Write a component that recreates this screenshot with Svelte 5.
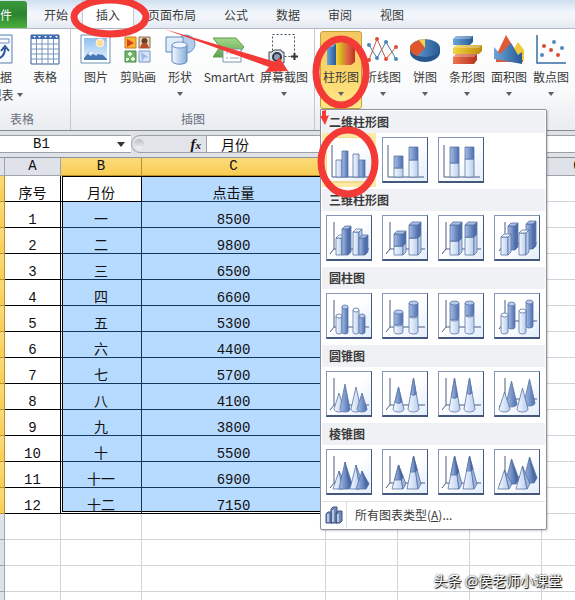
<script>
  const tabs = ['开始', '插入', '页面布局', '公式', '数据', '审阅', '视图'];

  const illustrations = [
    { label: '图片', icon: 'picture', size: 'small' },
    { label: '剪贴画', icon: 'clipart', size: 'medium' },
    { label: '形状', icon: 'shapes', size: 'small', menu: true },
    { label: 'SmartArt', icon: 'smartart', size: 'large' },
    { label: '屏幕截图', icon: 'screenshot', size: 'wide', menu: true }
  ];

  const charts = [
    { label: '柱形图', icon: 'column', open: true },
    { label: '折线图', icon: 'line' },
    { label: '饼图', icon: 'pie' },
    { label: '条形图', icon: 'bar' },
    { label: '面积图', icon: 'area' },
    { label: '散点图', icon: 'scatter' },
    { label: '其他图表', icon: 'other' }
  ];

  const months = ['一', '二', '三', '四', '五', '六', '七', '八', '九', '十', '十一', '十二'];
  const clicks = [8500, 9800, 6500, 6600, 5300, 4400, 5700, 4100, 3800, 5500, 6900, 7150];
  const columns = ['A', 'B', 'C', 'D', 'E', 'F', 'G', 'H'];
  const rest = ['D', 'E', 'F', 'G', 'H'];
  const emptyRows = [14, 15, 16, 17];

  // bars of each gallery thumbnail; split = height where the dark part ends
  const clustered = [
    { x: 9, w: 6, top: 22, bottom: 39 },
    { x: 15, w: 6, top: 13, bottom: 39, dark: true },
    { x: 26, w: 6, top: 16, bottom: 39 },
    { x: 32, w: 6, top: 22, bottom: 39, dark: true }
  ];
  const stacked = [
    { x: 11, w: 9, top: 18, split: 30, bottom: 39 },
    { x: 26, w: 9, top: 9, split: 22, bottom: 39 }
  ];
  const full = [
    { x: 11, w: 9, top: 9, split: 25, bottom: 39 },
    { x: 26, w: 9, top: 9, split: 21, bottom: 39 }
  ];
  const depth = [
    { x: 13, w: 7, top: 10, bottom: 34, dark: true },
    { x: 31, w: 7, top: 8, bottom: 33, dark: true },
    { x: 6, w: 7, top: 21, bottom: 39 },
    { x: 24, w: 7, top: 17, bottom: 39 }
  ];

  const gallery = [
    { title: '二维柱形图', kind: 'flat', items: [clustered, stacked, full] },
    { title: '三维柱形图', kind: 'box', items: [clustered, stacked, full, depth] },
    { title: '圆柱图', kind: 'cylinder', items: [clustered, stacked, full, depth] },
    { title: '圆锥图', kind: 'cone', items: [clustered, stacked, full, depth] },
    { title: '棱锥图', kind: 'pyramid', items: [clustered, stacked, full, depth] }
  ];
  const names = ['簇状', '堆积', '百分比堆积', '三维'];

  function axis(kind, item) {
    if (kind === 'flat') return 'M5 7V39H41';
    if (item === depth) return 'M10 6V27L4 35M10 27H42';
    return 'M7 6V33L3 38M7 33H42';
  }

  function block(kind, x, w, top, bottom, dark) {
    const fill = dark ? 'url(#dark)' : 'url(#light)';
    const r = x + w;
    if (kind === 'flat') return [{ d: `M${x} ${top}H${r}V${bottom}H${x}Z`, fill }];
    if (kind === 'box') {
      return [
        { d: `M${x} ${top}H${r}V${bottom}H${x}Z`, fill },
        { d: `M${x} ${top}l3-3h${w}l-3 3Z`, fill: dark ? '#a9bee3' : '#f5f9ff' },
        { d: `M${r} ${top}l3-3V${bottom - 3}l-3 3Z`, fill: dark ? '#4d6dab' : '#b8cae9' }
      ];
    }
    const h = w / 2;
    return [
      { d: `M${x} ${top}V${bottom - 1}a${h} 2 0 0 0 ${w} 0V${top}Z`, fill },
      { d: `M${x} ${top}a${h} 2 0 0 0 ${w} 0a${h} 2 0 0 0 ${-w} 0Z`, fill: dark ? '#b8cbed' : '#f4f8ff' }
    ];
  }

  function spike(kind, bar) {
    const grow = bar.split ? 1 : 2;
    const x = bar.x - grow;
    const w = bar.w + grow * 2;
    const mid = x + w / 2;
    const tip = bar.split ? bar.top - 3 : bar.top - 1;
    const fill = bar.dark ? 'url(#dark)' : 'url(#light)';
    const out = [];
    if (kind === 'cone') {
      out.push({ d: `M${mid} ${tip}L${x} ${bar.bottom - 2}a${w / 2} 3 0 0 0 ${w} 0Z`, fill });
    } else {
      out.push({ d: `M${mid} ${tip}L${x - 1} ${bar.bottom}H${x + w - 1}Z`, fill });
      out.push({ d: `M${mid} ${tip}L${x + w - 1} ${bar.bottom}l3-5Z`, fill: bar.dark ? '#4668a7' : '#9db4dc' });
    }
    if (bar.split) {
      const k = (bar.split - tip) / (bar.bottom - tip);
      const half = (w / 2) * k;
      if (kind === 'cone') {
        out.push({ d: `M${mid} ${tip}L${mid - half} ${bar.split}q${half} 3 ${half * 2} 0Z`, fill: 'url(#dark)' });
      } else {
        out.push({ d: `M${mid} ${tip}L${mid - half - k} ${bar.split}H${mid + half - k}Z`, fill: 'url(#dark)' });
        out.push({ d: `M${mid} ${tip}L${mid + half - k} ${bar.split}l${3 * k} ${-5 * k}Z`, fill: '#385b9c' });
      }
    }
    return out;
  }

  function parts(kind, item) {
    return item.flatMap((bar) => {
      if (kind === 'cone' || kind === 'pyramid') return spike(kind, bar);
      if (!bar.split) return block(kind, bar.x, bar.w, bar.top, bar.bottom, bar.dark);
      return [
        ...block(kind, bar.x, bar.w, bar.split, bar.bottom, false),
        ...block(kind, bar.x, bar.w, bar.top, bar.split, true)
      ];
    });
  }
</script>

{#snippet icon(name)}
  <svg class="icon" viewBox="0 0 32 32" aria-hidden="true">
    {#if name === 'pivot'}
      <path d="M1 1h29v28H1z" fill="#f5faff" stroke="#5a7fae" />
      <path d="M1 5h26v4H1z" fill="#fff" stroke="#6c8fbc" />
      <path d="M12 25c7 0 11-3 11-11M19 17l4-5 4 5M16 21l-5 4 5 4" fill="none" stroke="#2d5596" stroke-width="2" />
    {:else if name === 'table'}
      <path d="M2 1h28v29H2z" fill="#fff" stroke="#375d93" />
      <path d="M2 1h28v4H2z" fill="#3f6db4" />
      <path d="M2 10h28M2 15h28M2 20h28M2 25h28M7.500 5v25M13 5v25M19 5v25M24.500 5v25" stroke="#7595be" />
      <path d="M4 2h3l-1.500 2zM9 2h3l-1.500 2zM15 2h3l-1.500 2zM20 2h3l-1.500 2zM26 2h3l-1.500 2z" fill="#fff" />
    {:else if name === 'picture'}
      <path d="M1 1h29v28H1z" fill="#fff" stroke="#6d8fb8" />
      <path d="M4 4h23v22H4z" fill="url(#sky)" />
      <circle cx="20" cy="9" r="4" fill="#ffdca0" stroke="#fff3d4" />
      <path d="M4 24l7-8 5 6 4-4 7 7v1H4z" fill="#4777b5" />
      <path d="M8 20l3-4 4 5-3-1-1 2zM18 20l2-2 3 3z" fill="#e6f2ff" />
    {:else if name === 'clipart'}
      <path d="M3 3h11v11H3z" fill="#f7b52c" stroke="#cf7b2b" />
      <path d="M5 5l7 4-7 4z" fill="#d9421e" />
      <path d="M17 3h11v11H17z" fill="#f5d6aa" stroke="#806d62" />
      <circle cx="22.500" cy="7" r="3" fill="#654030" /><path d="M18 14q1-5 4.500-5t4.500 5z" fill="#b84d2a" />
      <path d="M3 17h11v11H3z" fill="#73b26e" stroke="#4b874d" />
      <path d="M8 18v4M6 20h4M5 24v3M4 25h3M11 23v4M9 25h4" stroke="#e0f6ce" stroke-width="2" />
      <path d="M17 17h11v11H17z" fill="#d7e4fa" stroke="#7896c5" /><path d="M19 18l7 5-4 1-2 4z" fill="#9eb7e6" />
    {:else if name === 'shapes'}
      <circle cx="22" cy="10" r="9" fill="#b3cdea" stroke="#6b8fbd" />
      <path d="M2 3h17v15H2z" fill="#e1edf9" stroke="#6188bc" />
      <path d="M8 11v16a7 3 0 0 0 15 0V11" fill="url(#cyl)" stroke="#5f87b9" />
      <ellipse cx="15.500" cy="11" rx="7.500" ry="3" fill="#edf6ff" stroke="#6d94c4" />
    {:else if name === 'smartart'}
      <path d="M0 4h23l8 9-8 10H0l7-10z" fill="url(#green)" stroke="#5b9c4b" />
      <path d="M10 15h18v13H10z" fill="#fff" stroke="#7b98ae" />
      <path d="M13 19h2M17 19h9M13 24h2M17 24h9" stroke="#95a6b7" />
    {:else if name === 'screenshot'}
      <path d="M4.500 .5h22v22h-22z" fill="none" stroke="#475261" stroke-dasharray="2 2" />
      <path d="M26.500 19v7M23 22.500h7" stroke="#333" stroke-width="2" />
      <path d="M1 18h3l2-2h7l1 2h2v11H1z" fill="#dce1e7" stroke="#3d4651" />
      <circle cx="9" cy="23" r="4" fill="#87a0bd" stroke="#303944" stroke-width="2" />
    {:else if name === 'column'}
      <path d="M2 13l4-3h5v21H2z" fill="url(#blue)" />
      <path d="M11 9l4-3h6v25H11z" fill="url(#gold)" />
      <path d="M20 9l5-3h5v22l-4 3h-6z" fill="url(#red)" />
      <path d="M2 13l4-3h5l-3 3zM11 9l4-3h6l-3 3zM20 9l5-3h5l-4 3z" fill="#fff" opacity=".35" />
    {:else if name === 'line'}
      <path d="M2 11l8 13 9-16 10 17" fill="none" stroke="#4a7fb0" />
      <path d="M2 26L10 5l9 20 10-12" fill="none" stroke="#c95740" />
      <g fill="#df4d35"><circle cx="2" cy="26" r="2" /><circle cx="10" cy="5" r="2" /><circle cx="19" cy="25" r="2" /><circle cx="29" cy="13" r="2" /></g>
      <g fill="#4b86b9"><circle cx="2" cy="11" r="2" /><circle cx="10" cy="24" r="2" /><circle cx="19" cy="8" r="2" /><circle cx="29" cy="25" r="2" /></g>
    {:else if name === 'pie'}
      <path d="M1 14v4a15 10 0 0 0 30 0v-4z" fill="#28578e" />
      <ellipse cx="16" cy="14" rx="15" ry="9" fill="url(#blue)" />
      <path d="M16 14L8 22Q1 19 1 14q0-5 9-8z" fill="#e0552c" />
      <path d="M16 14L10 6q3-1 6-1z" fill="#f4cf49" />
    {:else if name === 'bar'}
      <path d="M2 5l3-3h17v6l-3 3H2z" fill="url(#blue)" />
      <path d="M2 14l3-3h26v6l-3 3H2z" fill="url(#gold)" />
      <path d="M2 23l3-3h21v6l-3 4H2z" fill="url(#red)" />
      <path d="M2 5l3-3h17l-3 3zM2 14l3-3h26l-3 3zM2 23l3-3h21l-3 3z" fill="#fff" opacity=".3" />
    {:else if name === 'area'}
      <path d="M3 22L13 1l8 13 9 4v10H3z" fill="#e25a35" />
      <path d="M18 20l7-12 6 8v11z" fill="#f0c939" />
      <path d="M1 13l6 7 11-11 7 12 4-3v12L1 25z" fill="url(#blue)" />
    {:else if name === 'scatter'}
      <path d="M2 1v28h29" fill="none" stroke="#366da4" stroke-width="1.500" />
      <g fill="#d84e34"><circle cx="9" cy="12" r="2" /><circle cx="16" cy="16" r="2" /><circle cx="23" cy="21" r="2" /></g>
      <g fill="#5288bb"><circle cx="7" cy="21" r="2" /><circle cx="19" cy="8" r="2" /><circle cx="27" cy="14" r="2" /></g>
    {:else}
      <circle cx="16" cy="16" r="11" fill="none" stroke="#e39b43" stroke-width="5" />
    {/if}
  </svg>
{/snippet}

<div class="excel">
  <nav class="tabs">
    <button class="file">文件</button>
    {#each tabs as tab}
      <button class="tab" class:active={tab === '插入'}>{tab}</button>
    {/each}
  </nav>

  <div class="ribbon">
    <section class="group tables">
      <div class="buttons">
        <button class="tool pivot">
          {@render icon('pivot')}
          <span>数据</span>
          <span class="second">透视表<i class="arrow"></i></span>
        </button>
        <button class="tool table-tool">{@render icon('table')}<span>表格</span></button>
      </div>
      <div class="caption">表格</div>
    </section>
    <section class="group">
      <div class="buttons">
        {#each illustrations as tool}
          <button class="tool {tool.size}">
            {@render icon(tool.icon)}
            <span>{tool.label}</span>
            {#if tool.menu}<i class="arrow"></i>{/if}
          </button>
        {/each}
      </div>
      <div class="caption">插图</div>
    </section>
    <section class="group">
      <div class="buttons">
        {#each charts as tool}
          <div class="drop">
            <button class="tool chart" class:open={tool.open}>
              {@render icon(tool.icon)}
              <span>{tool.label}</span>
              <i class="arrow"></i>
            </button>
            {#if tool.open}
              <div class="menu">
                {#each gallery as section}
                  <h2>{section.title}</h2>
                  <div class="thumbs">
                    {#each section.items as item, i}
                      <button
                        class="thumb"
                        class:hover={section.kind === 'flat' && i === 0}
                        aria-label={names[i] + section.title}
                      >
                        <svg viewBox="0 0 44 44">
                          <path d={axis(section.kind, item)} fill="none" stroke="#4b5f83" />
                          {#each parts(section.kind, item) as part}
                            <path d={part.d} fill={part.fill} stroke="#5873a3" stroke-width=".8" stroke-linejoin="round" />
                          {/each}
                        </svg>
                      </button>
                    {/each}
                  </div>
                {/each}
                <button class="all">
                  <svg viewBox="0 0 18 18">
                    <path d="M1 8l2-2h4v11H1zM6 3l2-2h4v16H6zM11 7l2-2h4v10l-2 2h-4z" fill="#7389b5" stroke="#3f5482" />
                    <path d="M2 8h2v8H2zM7 4h2v12H7zM12 8h2v8h-2z" fill="#b9c8e5" />
                  </svg>
                  <span>所有图表类型(<u>A</u>)...</span>
                </button>
              </div>
            {/if}
          </div>
        {/each}
      </div>
      <div class="caption">图表</div>
    </section>
  </div>

  <div class="formula">
    <div class="name">
      <input aria-label="名称框" value="B1" />
      <i class="arrow dark"></i>
    </div>
    <div class="fx"><i class="knob"></i><button>f<small>x</small></button></div>
    <input class="value" aria-label="编辑栏" value="月份" />
  </div>

  <div class="sheet">
    <table>
      <colgroup>
        <col class="col-row" /><col class="col-a" /><col class="col-b" /><col class="col-c" />
        {#each rest as name}<col class="col-d" />{/each}
      </colgroup>
      <thead>
        <tr>
          <th></th>
          {#each columns as name}
            <th class:picked={name === 'B' || name === 'C'}>{name}</th>
          {/each}
        </tr>
      </thead>
      <tbody>
        <tr>
          <th class="picked"></th>
          <td class="line">序号</td>
          <td class="line first current">月份</td>
          <td class="line top blue">点击量</td>
          {#each rest as name}<td></td>{/each}
        </tr>
        {#each months as month, i}
          <tr class:last={i === 11}>
            <th class="picked"></th>
            <td class="line num">{i + 1}</td>
            <td class="line first blue">{month}</td>
            <td class="line blue num">{clicks[i]}</td>
            {#each rest as name}<td></td>{/each}
          </tr>
        {/each}
        {#each emptyRows as row}
          <tr>
            <th></th>
            <td></td><td></td><td></td>
            {#each rest as name}<td></td>{/each}
          </tr>
        {/each}
      </tbody>
    </table>
  </div>

  <svg class="marks" viewBox="0 0 575 600" aria-hidden="true">
    <defs>
      <linearGradient id="light"><stop offset="0" stop-color="#f4f9ff" /><stop offset="1" stop-color="#b9ccec" /></linearGradient>
      <linearGradient id="dark"><stop offset="0" stop-color="#a9bee4" /><stop offset="1" stop-color="#4c6fb2" /></linearGradient>
      <linearGradient id="sky" x2="0" y2="1"><stop offset="0" stop-color="#8fc0ef" /><stop offset="1" stop-color="#e2f2ff" /></linearGradient>
      <linearGradient id="cyl"><stop offset="0" stop-color="#f2f8ff" /><stop offset="1" stop-color="#85add9" /></linearGradient>
      <linearGradient id="green" x2="0" y2="1"><stop offset="0" stop-color="#a4d889" /><stop offset="1" stop-color="#5ea54e" /></linearGradient>
      <linearGradient id="blue"><stop offset="0" stop-color="#6ba5dc" /><stop offset="1" stop-color="#275992" /></linearGradient>
      <linearGradient id="gold"><stop offset="0" stop-color="#f2d33c" /><stop offset="1" stop-color="#c18a12" /></linearGradient>
      <linearGradient id="red"><stop offset="0" stop-color="#ee7650" /><stop offset="1" stop-color="#b83220" /></linearGradient>
    </defs>
    <g fill="none" stroke="#f43a37" stroke-width="7">
      <ellipse cx="110" cy="17" rx="36" ry="17" />
      <ellipse cx="341" cy="72" rx="25" ry="33" />
      <ellipse cx="348" cy="162" rx="27" ry="32" />
    </g>
    <path d="M164 29L276 62L279 57L288 71L265 72L269 67Z" fill="#f43a37" />
    <path d="M322 111l4-1v6l3-1-4 10-5-9h2z" fill="#f43a37" />
  </svg>
  <div class="watermark">头条 @侯老师小课堂</div>
</div>

<style>
  :global(body) {
    margin: 0;
    overflow: hidden;
  }

  .excel {
    position: relative;
    height: 100vh;
    overflow: hidden;
    display: flex;
    flex-direction: column;
    background: #fff;
    color: #3b3b3b;
    font: 12px "Noto Sans CJK SC", sans-serif;
  }

  button, input {
    margin: 0;
    padding: 0;
    border: 0;
    background: none;
    color: inherit;
    font: inherit;
    white-space: nowrap;
  }

  .tabs {
    display: flex;
    flex: none;
    height: 28px;
    background: linear-gradient(#cfdfef, #edf4fb 40%, #f3f6fa 60%, #e4eaf2);
  }

  .file {
    width: 27px;
    margin: 1px 3px 0 0;
    display: flex;
    justify-content: flex-end;
    align-items: center;
    padding-right: 15px;
    box-sizing: border-box;
    border-radius: 0 3px 0 0;
    background: linear-gradient(#3b9a3b, #2b8430 50%, #4cb03c);
    color: #fff;
  }

  .tab {
    padding: 0 14px;
  }

  .tab.active {
    padding: 0 13px;
    border: 1px solid #c2cad5;
    border-bottom: 0;
    background: #fff;
  }

  .ribbon {
    display: flex;
    flex: none;
    height: 101px;
    border-top: 1px solid #b3bac4;
    border-bottom: 1px solid #868b94;
    background: linear-gradient(#fff, #f9fafb 60%, #e9ecf0);
  }

  .group {
    flex: none;
    padding: 2px 4px 0 5px;
    border-right: 1px solid #c3c8d0;
  }

  .tables {
    width: 90px;
    margin-left: -28px;
    padding: 2px 3px 0 5px;
  }

  .buttons {
    display: flex;
    height: 78px;
  }

  .tables .buttons {
    justify-content: flex-end;
  }

  .caption {
    height: 20px;
    line-height: 20px;
    text-align: center;
    color: #68707e;
  }

  .tool {
    display: flex;
    flex-direction: column;
    align-items: center;
    height: 78px;
    padding-top: 3px;
    box-sizing: border-box;
    flex: none;
    line-height: 20px;
  }

  .icon {
    width: 32px;
    height: 32px;
    margin-bottom: 1px;
    flex: none;
  }

  .pivot { width: 46px; }
  .pivot .icon { align-self: flex-end; margin-right: 9px; }
  .second { display: flex; align-items: center; gap: 3px; line-height: 16px; }
  .second .arrow { margin: 0; }
  .table-tool { width: 44px; }
  .small { width: 40px; }
  .medium { width: 44px; }
  .large { width: 58px; }
  .wide { width: 52px; }

  .chart {
    min-width: 42px;
    padding: 2px 2px 0;
    border: 1px solid transparent;
    border-radius: 3px;
  }

  .chart.open {
    border-color: #c79f3b;
    background: linear-gradient(#f5c762, #fbd468 50%, #ffe98b);
  }

  .arrow {
    width: 0;
    margin-top: 5px;
    border: 3px solid transparent;
    border-top: 4px solid #5c5f66;
    border-bottom: 0;
  }

  .drop {
    position: relative;
  }

  .menu {
    position: absolute;
    z-index: 2;
    top: 78px;
    left: 0;
    padding: 1px;
    border: 1px solid #8b909b;
    border-radius: 0 2px 2px 2px;
    background: #fff;
    box-shadow: 1px 1px 2px #0003;
  }

  h2 {
    height: 22px;
    margin: 0;
    padding-left: 7px;
    background: #f0f1f5;
    font-size: 12px;
    line-height: 22px;
  }

  .thumbs {
    display: grid;
    grid-template-columns: repeat(4, 46px);
    gap: 10px;
    padding: 4px 5px 6px 4px;
  }

  .thumb {
    height: 46px;
    border: 1px solid #8797b5;
    border-right-color: #44577c;
    border-bottom: 2px solid #44577c;
    background: linear-gradient(135deg, #fff 50%, #e2edfb);
    box-sizing: border-box;
  }

  .thumb.hover {
    border-color: #f3d98a;
    box-shadow: 0 0 0 4px #fde9a4;
  }

  .thumb svg {
    display: block;
    width: 44px;
    height: 44px;
  }

  .all {
    display: flex;
    align-items: center;
    width: 100%;
    height: 27px;
    border-top: 1px solid #dcdfe4;
  }

  .all svg {
    width: 18px;
    height: 18px;
    padding: 0 3px;
  }

  .all span {
    padding-left: 8px;
    border-left: 1px solid #dcdfe4;
    line-height: 26px;
  }

  .formula {
    display: flex;
    flex: none;
    height: 18px;
    padding: 4px 0;
    border-bottom: 1px solid #8d929b;
    background: #dfe2e7;
    color: #111;
  }

  .formula > * {
    border: solid #9ba0aa;
    border-width: 1px 0;
  }

  .name {
    display: flex;
    align-items: center;
    width: 131px;
    background: #fff;
  }

  .name input {
    width: 84px;
    padding-left: 33px;
    font: 14px "Liberation Mono", monospace;
  }

  .name .dark {
    margin: 0;
    border-width: 4px;
    border-top-width: 5px;
    border-top-color: #333;
    border-bottom: 0;
  }

  .fx {
    display: flex;
    align-items: center;
    justify-content: space-between;
    width: 76px;
    border-left-width: 1px;
    border-right-width: 1px;
    border-radius: 10px 0 0 10px;
    background: #e2e4e9;
    box-sizing: border-box;
  }

  .knob {
    width: 10px;
    height: 10px;
    margin-left: 2px;
    border-radius: 50%;
    background: linear-gradient(#b8bcc4, #f3f4f6);
  }

  .fx button {
    padding-right: 5px;
    font: italic bold 15px/16px "Liberation Serif", serif;
  }

  .fx small {
    font-size: 11px;
  }

  .value {
    flex: 1;
    min-width: 0;
    padding-left: 14px;
    background: #fff;
    font-size: 14px;
    line-height: 16px;
  }

  .sheet {
    flex: 1;
    min-height: 0;
    overflow: hidden;
  }

  table {
    width: 0;
    table-layout: fixed;
    border-spacing: 0;
    color: #111;
  }

  .col-row { width: 5px; }
  .col-a { width: 56px; }
  .col-b { width: 81px; }
  .col-c { width: 184px; }
  .col-d { width: 72px; }

  th, td {
    box-sizing: border-box;
    padding: 0;
    border: solid #d0d3d8;
    border-width: 0 1px 1px 0;
  }

  th {
    height: 18px;
    border-color: #9fa5af;
    background: #dfe2e8;
    font: 14px/17px "Liberation Mono", monospace;
  }

  th.picked {
    border-color: #b9912e;
    background: linear-gradient(#fadb7c, #f9cd52);
  }

  td {
    height: 26px;
    vertical-align: bottom;
    text-align: center;
    font-size: 14px;
    line-height: 18px;
  }

  .num {
    font: 14px/14px "Liberation Mono", monospace;
  }

  .line {
    border-color: #000;
  }

  .blue {
    border-color: #12365c;
    background: #b7dbff;
  }

  .first {
    box-shadow: inset 1px 0 #fff, inset 2px 0 #000;
  }

  .current {
    box-shadow: inset 1px 0 #fff, inset 2px 1px #000;
  }

  .top {
    box-shadow: inset 0 1px #000;
  }

  .last .blue {
    border-bottom-color: #000;
    box-shadow: inset 0 -1px #fff, inset 0 -2px #000;
  }

  .last .first {
    box-shadow: inset 1px -1px #fff, inset 2px -2px #000;
  }

  .marks {
    position: absolute;
    z-index: 3;
    top: 0;
    left: 0;
    width: 575px;
    height: 600px;
    pointer-events: none;
  }

  .watermark {
    position: absolute;
    right: 13px;
    bottom: 10px;
    color: #fff;
    font-size: 14px;
    line-height: 20px;
    text-shadow: 1px 1px 1px #000, 0 0 2px #000;
  }
</style>
